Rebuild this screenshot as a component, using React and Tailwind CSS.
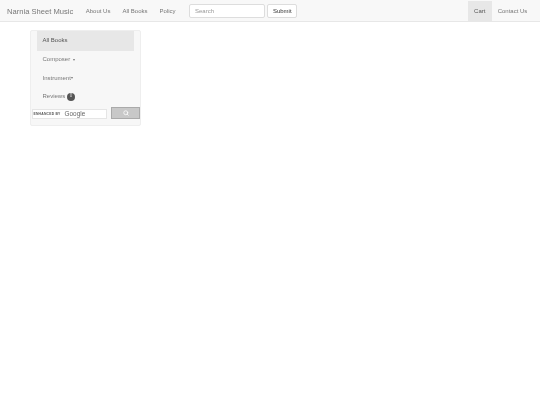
import { Search } from 'lucide-react';

export default function App() {
  return (
    <div className="w-[540px] h-[405px] bg-white overflow-hidden blur-[0.3px] font-['Liberation_Sans',Arial,sans-serif]">
      <nav className="h-[22px] flex items-stretch bg-[#f8f8f8] border-b border-[#e7e7e7] pt-[1px] text-[6px] text-[#777]">
        <a className="pl-[7px] pr-[6.5px] text-[7.6px] leading-[21px]">Narnia Sheet Music</a>
        <a className="px-[6px] leading-[21px]">About Us</a>
        <a className="px-[6px] leading-[21px]">All Books</a>
        <a className="px-[6px] leading-[21px]">Policy</a>
        <form className="flex items-center gap-[2px] pl-[7.5px] pt-[0.5px]">
          <input
            placeholder="Search"
            className="w-[76.5px] h-[14px] px-[5px] bg-white border border-[#ddd] rounded-[2px] text-[6px] placeholder:text-[#999]"
          />
          <button className="w-[29.5px] h-[14px] bg-white border border-[#ddd] rounded-[2px] text-[6px] text-[#333]">Submit</button>
        </form>
        <div className="ml-auto flex pr-[7px]">
          <a className="w-[24.5px] text-center bg-[#e7e7e7] text-[#555] leading-[21px]">Cart</a>
          <a className="w-[41px] text-center leading-[21px]">Contact Us</a>
        </div>
      </nav>

      <aside className="ml-[29.5px] mt-[8px] w-[111.5px] h-[96px] bg-[#f7f7f7] border border-[#eee] rounded-[2px] text-[6px] text-[#777]">
        <ul className="px-[6px]">
          <li className="h-[19.5px] pl-[6px] flex items-center bg-[#e7e7e7] text-[#555]">All Books</li>
          <li className="h-[18.5px] pl-[6px] flex items-center gap-[2.5px]">
            Composer
            <span className="border-x-[1.5px] border-x-transparent border-t-[2px] border-t-[#777]" />
          </li>
          <li className="h-[18.5px] pl-[6px] flex items-center gap-[0.5px]">
            Instrument
            <span className="border-x-[1.5px] border-x-transparent border-t-[2px] border-t-[#777]" />
          </li>
          <li className="h-[18.5px] pl-[6px] flex items-center gap-[1.5px]">
            Reviews
            <span className="w-[8.5px] h-[8.5px] rounded-full bg-[#555] text-[#ddd] text-[4.5px] flex items-center justify-center">0</span>
          </li>
        </ul>
        <div className="flex items-start pl-[1px] pt-[1px] gap-[4px]">
          <div className="w-[76px] h-[10.5px] mt-[1.5px] bg-white border border-[#e5e5e5] flex items-center">
            <span className="text-[3.4px] font-bold text-[#555] tracking-[0.2px] pl-[1px] pt-[1px]">ENHANCED BY</span>
            <span className="text-[6.4px] text-[#666] pl-[4px]">Google</span>
          </div>
          <button className="w-[29px] h-[12px] bg-[#c8c8c8] border border-[#aaa] flex items-center justify-center">
            <Search className="w-[6px] h-[6px] text-white" strokeWidth={3} />
          </button>
        </div>
      </aside>
    </div>
  );
}
